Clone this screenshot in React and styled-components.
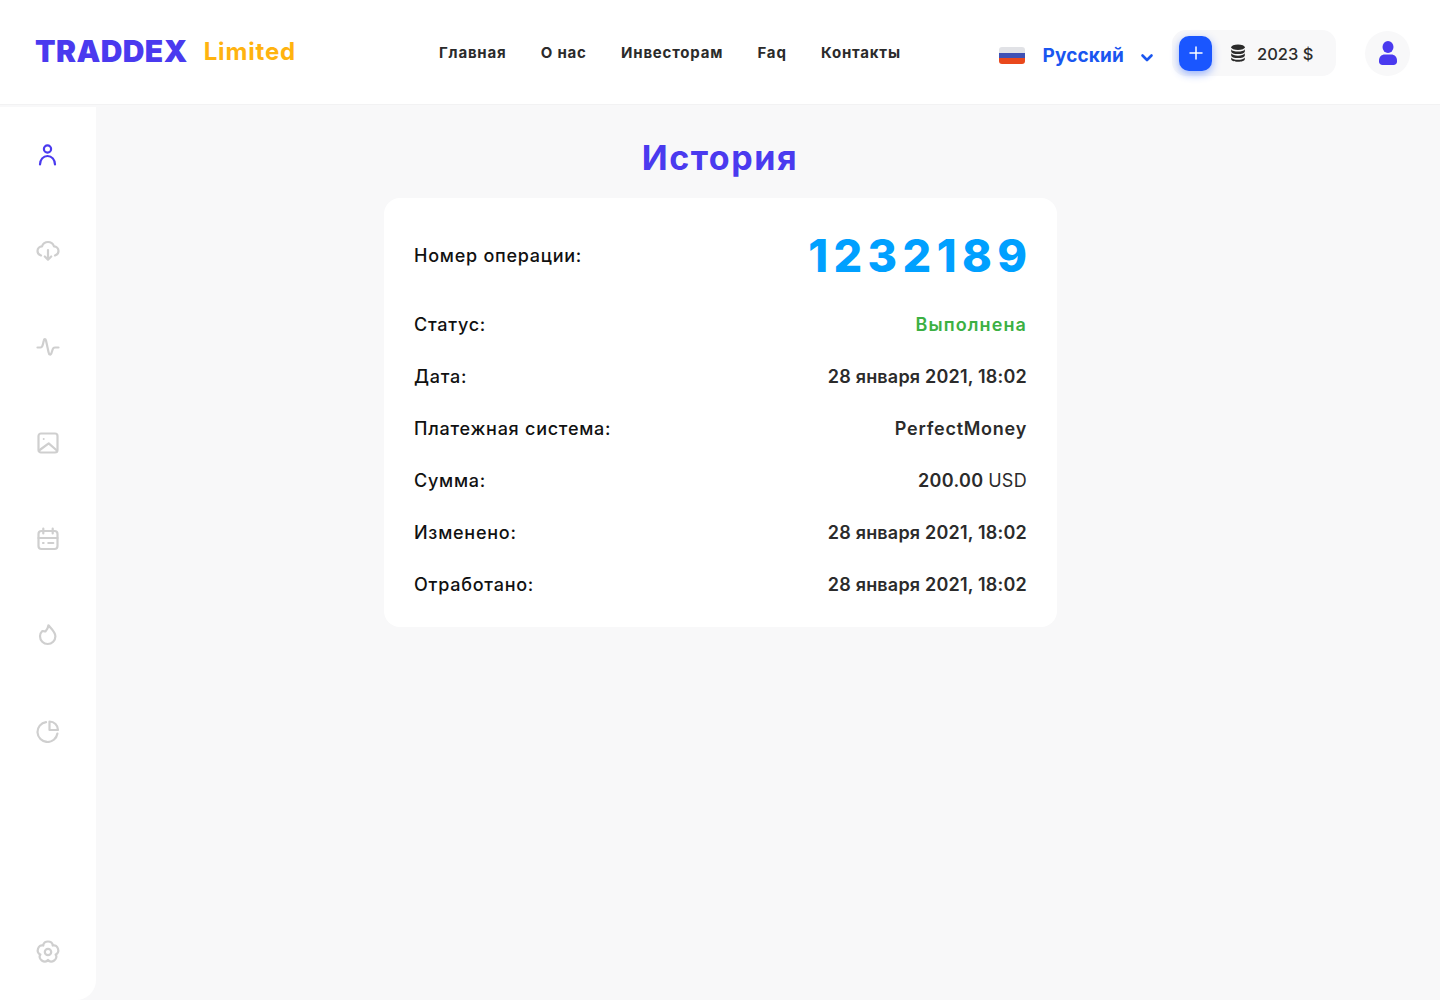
import React from "react";
import styled, { createGlobalStyle } from "styled-components";

const GlobalStyle = createGlobalStyle`
  html, body { margin: 0; padding: 0; background: #f8f8f9; }
  body { font-family: "Inter", "Noto Sans", sans-serif; color: #2b2b2b; }
  * { box-sizing: border-box; }
`;

const Page = styled.div`
  width: 1440px;
  height: 1000px;
  overflow: hidden;
  display: flex;
  flex-direction: column;
`;

const Header = styled.header`
  height: 105px;
  flex: none;
  background: #fff;
  border-bottom: 1px solid #f2f2f3;
  display: flex;
  align-items: center;
  padding: 0 30px 0 35px;
`;

const Logo = styled.div`
  width: 404px;
  display: flex;
  align-items: center;
  gap: 16px;
  margin-top: -2px;
`;

const LogoMark = styled.span`
  font-size: 30px;
  font-weight: 900;
  letter-spacing: 0.4px;
  color: #4a3aef;
`;

const LogoSuffix = styled.span`
  font-size: 24px;
  font-weight: 700;
  letter-spacing: 0.85px;
  color: #ffb30f;
`;

const Nav = styled.nav`
  display: flex;
  gap: 34.3px;
  margin-top: 1px;
`;

const NavLink = styled.a`
  font-size: 15px;
  font-weight: 700;
  letter-spacing: 0.8px;
  color: #2b2b2b;
`;

const HeaderRight = styled.div`
  margin-left: auto;
  margin-top: 2px;
  display: flex;
  align-items: center;
`;

const Lang = styled.div`
  display: flex;
  align-items: center;
  color: #1a56f0;
  font-size: 19px;
  font-weight: 700;
  letter-spacing: 0.15px;
  margin-top: 4px;
  margin-right: 18px;
`;

const Flag = styled.div`
  width: 26px;
  height: 17px;
  margin-top: 4px;
  border-radius: 3px;
  overflow: hidden;
  margin-right: 17px;
  background: linear-gradient(#e1e2e6 0 33%, #3f51b5 33% 66%, #e9481c 66%);
`;

const Chevron = styled.svg`
  width: 14px;
  height: 14px;
  margin-left: 16px;
  margin-top: 6px;
`;

const Balance = styled.div`
  width: 164px;
  height: 46px;
  border-radius: 14px;
  background: #f8f8f9;
  display: flex;
  align-items: center;
  padding-left: 7px;
  margin-right: 29px;
`;

const AddButton = styled.button`
  width: 33px;
  height: 35px;
  border: 0;
  padding: 0;
  border-radius: 10px;
  background: #1a56ff;
  box-shadow: 0 3px 8px rgba(26, 86, 255, 0.45);
  display: flex;
  align-items: center;
  justify-content: center;
`;

const Coins = styled.svg`
  width: 16px;
  height: 18px;
  margin-left: 18px;
  margin-right: 11px;
`;

const Amount = styled.span`
  font-size: 16.5px;
  font-weight: 500;
  margin-top: 2px;
  color: #2b2b2b;
`;

const Avatar = styled.div`
  width: 45px;
  height: 45px;
  border-radius: 50%;
  background: #f8f8f9;
  display: flex;
  align-items: center;
  justify-content: center;
`;

const Body = styled.div`
  flex: 1;
  display: flex;
  min-height: 0;
`;

const Sidebar = styled.aside`
  width: 96px;
  flex: none;
  margin-top: 2px;
  background: #fff;
  border-bottom-right-radius: 20px;
  display: flex;
  flex-direction: column;
  align-items: center;
  padding: 32px 0 32px;
`;

const SideItem = styled.div`
  height: 32px;
  width: 32px;
  margin-bottom: 64px;
  display: flex;
  align-items: center;
  justify-content: center;
  color: ${(p) => (p.$active ? "#4a3aef" : "#cfcfcf")};
  &:last-child {
    margin-top: auto;
    margin-bottom: 0;
  }
`;

const Main = styled.main`
  flex: 1;
  padding-right: 96px;
  display: flex;
  flex-direction: column;
  align-items: center;
`;

const Title = styled.h1`
  margin: 29px 0 16px;
  font-size: 34px;
  line-height: 48px;
  font-weight: 700;
  letter-spacing: 1.6px;
  color: #4a3aef;
`;

const Card = styled.section`
  width: 673px;
  background: #fff;
  border-radius: 16px;
  padding: 26px 29.5px 17px 30.5px;
`;

const Row = styled.div`
  display: flex;
  justify-content: space-between;
  align-items: center;
  height: ${(p) => (p.$top ? "62px" : "52px")};
  margin-bottom: ${(p) => (p.$top ? "12px" : "0")};
`;

const Label = styled.span`
  font-size: 18px;
  font-weight: 500;
  letter-spacing: 0.75px;
  color: #111;
`;

const Value = styled.span`
  font-size: 18px;
  font-weight: 600;
  letter-spacing: ${(p) => p.$spacing || "0.2px"};
  color: ${(p) => p.$color || "#2b2b2b"};
`;

const Light = styled.span`
  font-weight: 400;
`;

const OperationNumber = styled.span`
  font-size: 45px;
  font-weight: 800;
  letter-spacing: 5.4px;
  margin-right: -5.4px;
  color: #00a0ff;
`;

const Icon = ({ children, size = 24 }) => (
  <svg width={size} height={size} viewBox="0 0 24 24" fill="none" stroke="currentColor" strokeWidth="2.2" strokeLinecap="round" strokeLinejoin="round">
    {children}
  </svg>
);

// five-lobed outline of the settings icon
const flowerPath = () => {
  const pt = (r, deg) => {
    const a = (deg * Math.PI) / 180;
    return `${(12 + r * Math.cos(a)).toFixed(2)} ${(12 + r * Math.sin(a)).toFixed(2)}`;
  };
  let d = `M${pt(8, -126)}`;
  for (let k = 0; k < 5; k++) {
    const lobe = -90 + 72 * k;
    d += `C${pt(12.8, lobe - 22)} ${pt(12.8, lobe + 22)} ${pt(8, lobe + 36)}`;
  }
  return d + "Z";
};

const navItems = ["Главная", "О нас", "Инвесторам", "Faq", "Контакты"];

const sideIcons = [
  <><circle cx="11.500" cy="6" r="3.600" /><path d="M4 21.500c0-5 3.300-8.500 7.500-8.500s7.500 3.500 7.500 8.500" /></>,
  <><path d="M5 16.500C2.800 15.800 1.500 14 1.500 12c0-2.500 2-4.500 4.500-4.700C7 4.500 9.300 3 12 3s5 1.500 6 4.300c2.500.2 4.500 2.200 4.500 4.700 0 2-1.300 3.800-3.500 4.500" /><path d="M12 11v9.500M8.800 17.500l3.200 3.200 3.200-3.200" /></>,
  <path d="M1.500 12.500H4.500C6 12.500 6.500 11 7 9L7.800 5.500C8.200 3.500 9.500 3.500 10 5.500L12.500 17C13 20 14.800 20.500 15.500 18L16.800 14C17.200 12.800 18 12.500 19 12.500H22.500" />,
  <><rect x="2.500" y="2.500" width="19" height="19" rx="2.500" /><circle cx="7.700" cy="8" r="1" fill="currentColor" stroke="none" /><path d="M3.700 19l9-6.700 7.600 6.700" /></>,
  <><rect x="2.500" y="4" width="19" height="18" rx="3" /><path d="M2.500 11h19M7.300 1.500v5M16.700 1.500v5M7 16h.6M12.300 16h5" /></>,
  <path d="M6.300 8C4.800 9.400 4 11.200 4 13.300a7.700 7.700 0 0 0 15.400 0c0-4-3.500-7-7-11-.3 2.500-1.400 4.500-3 6.200-.9-.2-1.800-.5-3.100-.5z" />,
  <><path d="M10 3.100A10 10 0 1 0 21.400 14.500" /><path d="M13.500 2.500a8.500 8.500 0 0 1 8.500 8.500h-8.500z" /></>,
  <><path d={flowerPath()} /><circle cx="12" cy="12" r="3.200" /></>,
];

const rows = [
  ["Дата:", "28 января 2021, 18:02"],
  ["Платежная система:", "PerfectMoney", "0.75px"],
  ["Сумма:", <>200.00 <Light>USD</Light></>, "0.3px"],
  ["Изменено:", "28 января 2021, 18:02"],
  ["Отработано:", "28 января 2021, 18:02"],
];

export default function App() {
  return (
    <Page>
      <GlobalStyle />
      <Header>
        <Logo>
          <LogoMark>TRADDEX</LogoMark>
          <LogoSuffix>Limited</LogoSuffix>
        </Logo>
        <Nav>
          {navItems.map((item) => (
            <NavLink key={item}>{item}</NavLink>
          ))}
        </Nav>
        <HeaderRight>
          <Flag />
          <Lang>
            Русский
            <Chevron viewBox="0 0 14 14" fill="none" stroke="#1a56f0" strokeWidth="2.600" strokeLinecap="round" strokeLinejoin="round">
              <path d="M2.500 4.500L7 9l4.500-4.500" />
            </Chevron>
          </Lang>
          <Balance>
            <AddButton aria-label="Пополнить">
              <svg width="14" height="14" viewBox="0 0 14 14" stroke="#fff" strokeWidth="1.500" strokeLinecap="round">
                <path d="M7 1v12M1 7h12" />
              </svg>
            </AddButton>
            <Coins viewBox="0 0 16 18" fill="#2b2b2b">
              <ellipse cx="8" cy="3.200" rx="6.800" ry="2.800" />
              <path d="M1.200 5.200C2 7 5 7.600 8 7.600s6-.6 6.800-2.400v2.200C14.800 9 11.800 10 8 10S1.200 9 1.200 7.400z" />
              <path d="M1.200 9.300C2 11 5 11.700 8 11.700s6-.7 6.800-2.400v2.200c0 1.600-3 2.600-6.800 2.600s-6.800-1-6.800-2.600z" />
              <path d="M1.200 13.400C2 15.100 5 15.800 8 15.800s6-.7 6.800-2.400v1.800c0 1.600-3 2.500-6.800 2.500s-6.800-.9-6.800-2.500z" />
            </Coins>
            <Amount>2023 $</Amount>
          </Balance>
          <Avatar>
            <svg width="18" height="24" viewBox="0 0 18 24" fill="#4a3aef">
              <ellipse cx="9" cy="6" rx="5.500" ry="6" />
              <path d="M0 19.500C0 15.500 3 13.500 5.500 13.500h7c2.500 0 5.500 2 5.500 6v1c0 2-1.500 3.500-3.500 3.500h-11C1.500 24 0 22.500 0 20.500z" />
            </svg>
          </Avatar>
        </HeaderRight>
      </Header>
      <Body>
        <Sidebar>
          {sideIcons.map((icon, i) => (
            <SideItem key={i} $active={i === 0}>
              <Icon>{icon}</Icon>
            </SideItem>
          ))}
        </Sidebar>
        <Main>
          <Title>История</Title>
          <Card>
            <Row $top>
              <Label>Номер операции:</Label>
              <OperationNumber>1232189</OperationNumber>
            </Row>
            <Row>
              <Label>Статус:</Label>
              <Value $color="#3cb043" $spacing="1.1px">Выполнена</Value>
            </Row>
            {rows.map(([label, value, spacing]) => (
              <Row key={label}>
                <Label>{label}</Label>
                <Value $spacing={spacing}>{value}</Value>
              </Row>
            ))}
          </Card>
        </Main>
      </Body>
    </Page>
  );
}
